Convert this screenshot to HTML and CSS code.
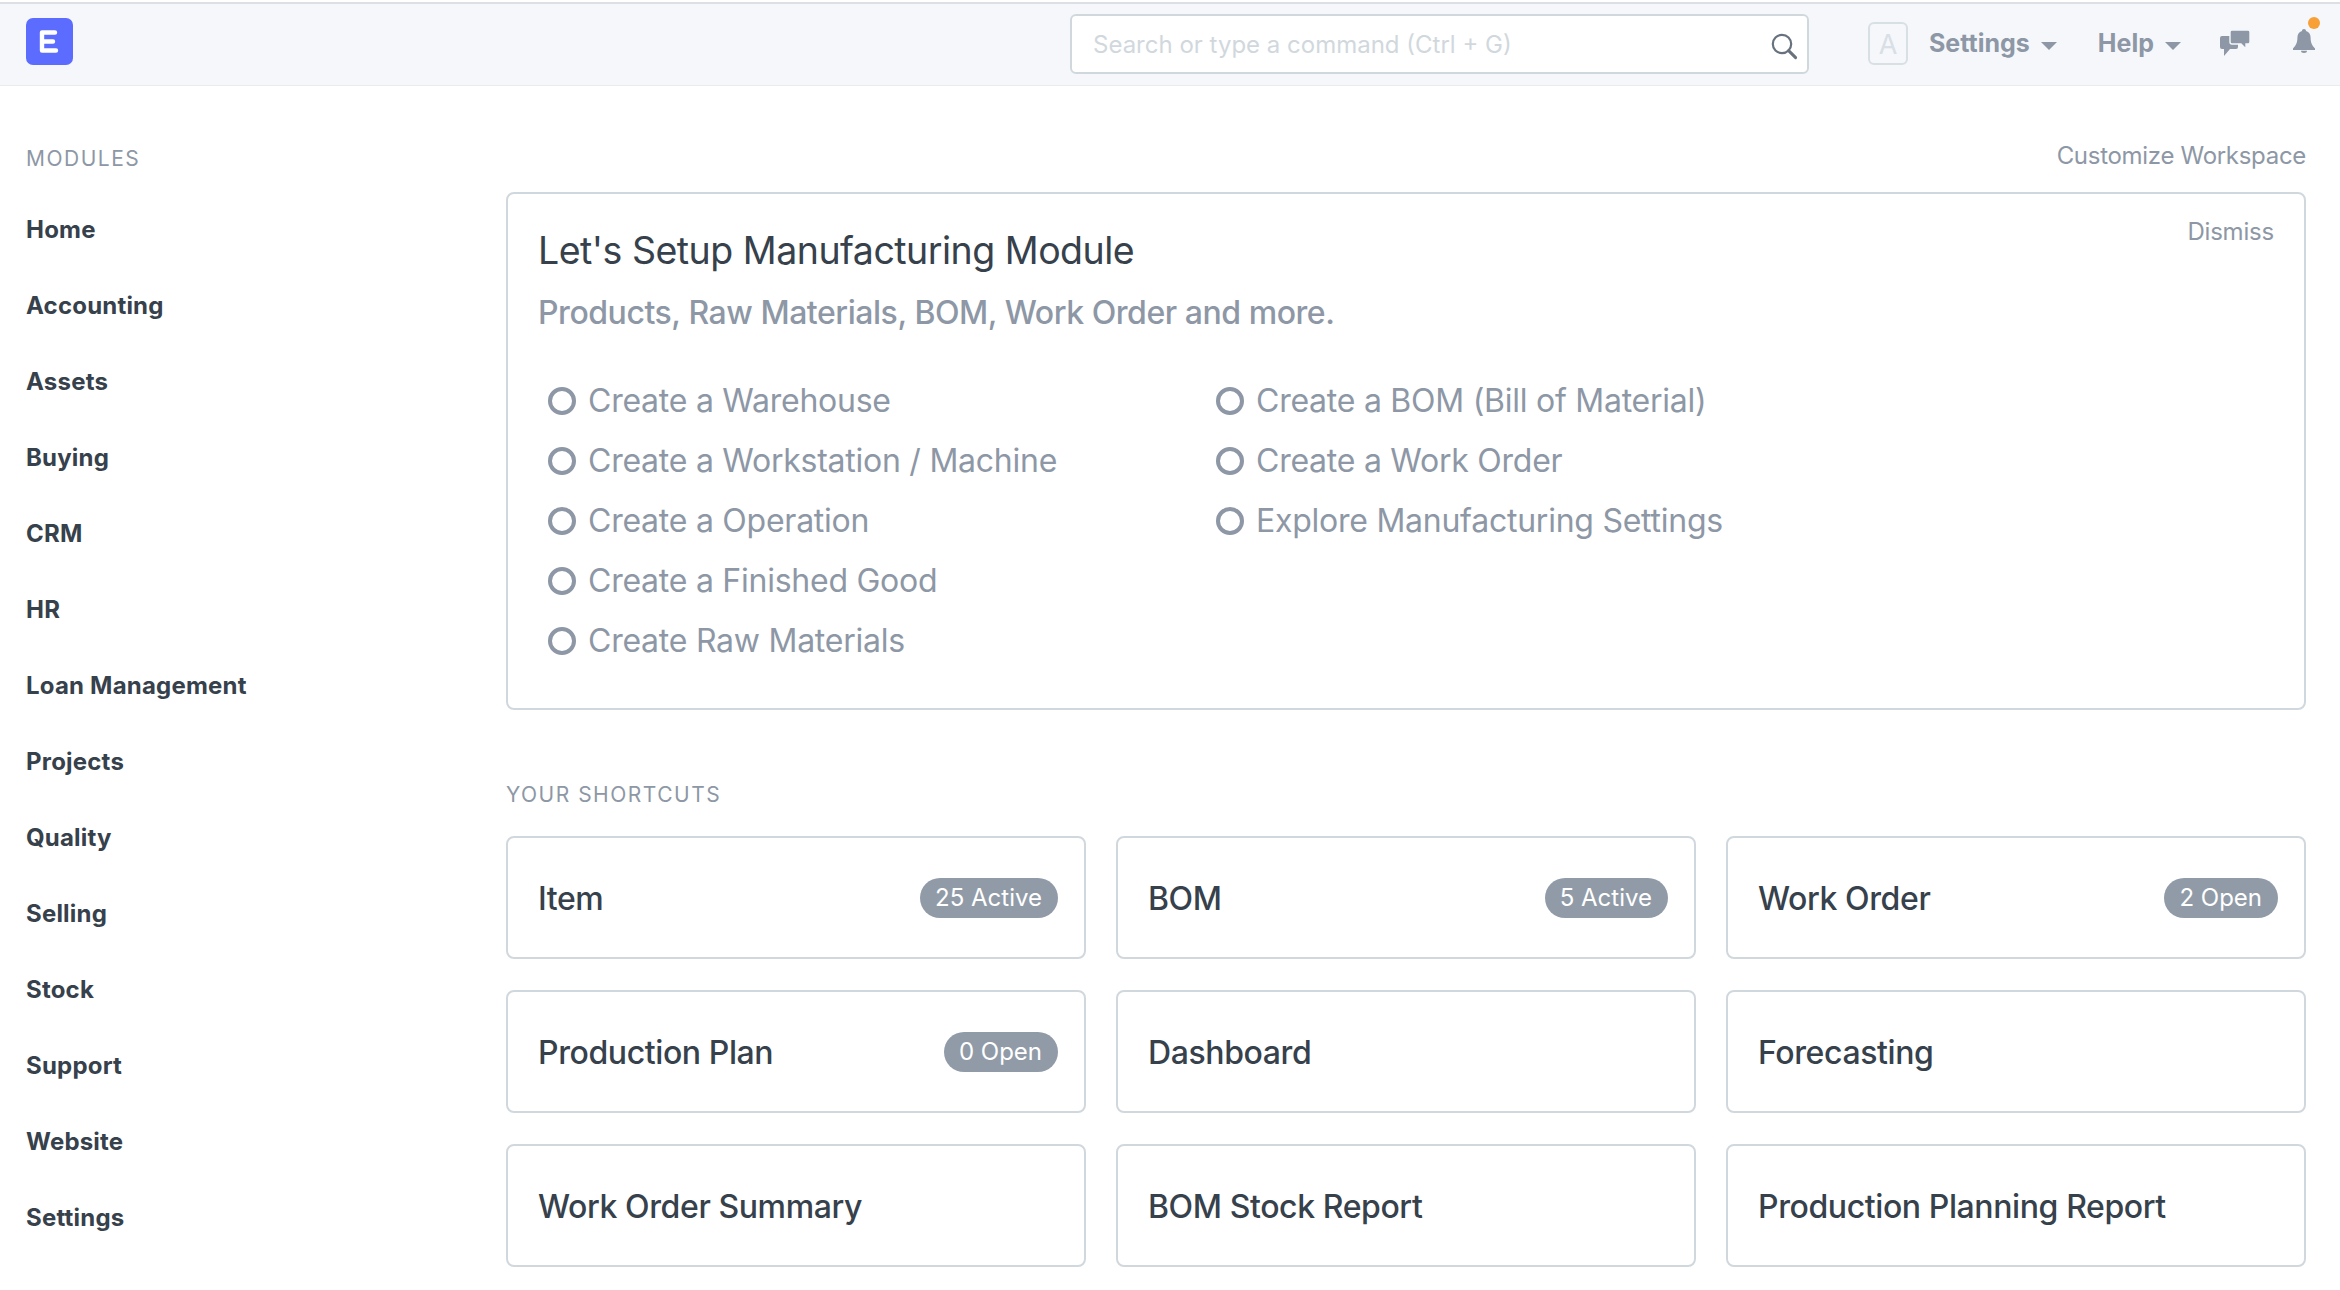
FILE: index.html
```html
<!DOCTYPE html>
<html lang="en">
<head>
  <meta charset="UTF-8" />
  <meta name="viewport" content="width=device-width, initial-scale=1.0" />
  <title>Manufacturing</title>
  <link rel="stylesheet" href="styles.css">
</head>
<body>
  <header class="navbar">
    <div class="logo">
      <svg viewBox="0 0 47 47" width="47" height="47">
        <path d="M16 14.5h13M16 23.5h11M16 32.5h14M16 14.5v18" fill="none" stroke="#fff" stroke-width="4.4" stroke-linecap="round" stroke-linejoin="round"/>
      </svg>
    </div>
    <div class="search">
      <span class="search-text">Search or type a command (Ctrl + G)</span>
      <svg class="search-icon" viewBox="0 0 28 28" width="28" height="28">
        <circle cx="12" cy="12" r="9.2" fill="none" stroke="#68727e" stroke-width="2.2"/>
        <path d="M18.6 18.6l7 7" stroke="#68727e" stroke-width="3" stroke-linecap="round"/>
      </svg>
    </div>
    <div class="avatar">A</div>
    <div class="nav-link nav-settings">Settings <span class="caret"></span></div>
    <div class="nav-link nav-help">Help <span class="caret"></span></div>
    <svg class="chat-icon" viewBox="0 0 30 27" width="30" height="27">
      <path d="M2 7h14a2 2 0 0 1 2 2v9a2 2 0 0 1-2 2H10l-6 7v-7H2a2 2 0 0 1-2-2V9a2 2 0 0 1 2-2z" fill="#8d97a5"/>
      <path d="M12 1h16a2 2 0 0 1 2 2v10a2 2 0 0 1-2 2h-2v5l-5-5h-9a2 2 0 0 1-2-2V3a2 2 0 0 1 2-2z" fill="#8d97a5" stroke="#f5f7fb" stroke-width="1.400"/>
    </svg>
    <div class="bell">
      <svg viewBox="0 0 22 24" width="22" height="24">
        <path d="M11 0c1.300 0 2 .8 2 2 3.200 1 4.600 3.500 4.600 6.800 0 5 1.400 7.500 4.400 10.700V21H0v-1.500c3-3.200 4.400-5.700 4.400-10.700C4.400 5.500 5.800 3 9 2c0-1.200.7-2 2-2z" fill="#8d97a5"/>
        <path d="M8 21.800h6a3 2.200 0 0 1-6 0z" fill="#8d97a5"/>
      </svg>
      <span class="bell-dot"></span>
    </div>
  </header>

  <div class="page">
    <aside class="sidebar">
      <div class="sidebar-label">MODULES</div>
      <a class="module">Home</a>
      <a class="module">Accounting</a>
      <a class="module">Assets</a>
      <a class="module">Buying</a>
      <a class="module">CRM</a>
      <a class="module">HR</a>
      <a class="module">Loan Management</a>
      <a class="module">Projects</a>
      <a class="module">Quality</a>
      <a class="module">Selling</a>
      <a class="module">Stock</a>
      <a class="module">Support</a>
      <a class="module">Website</a>
      <a class="module">Settings</a>
    </aside>

    <main class="content">
      <div class="customize">Customize Workspace</div>

      <section class="setup">
        <div class="dismiss">Dismiss</div>
        <h1 class="setup-title">Let's Setup Manufacturing Module</h1>
        <p class="setup-sub">Products, Raw Materials, BOM, Work Order and more.</p>
        <div class="steps">
          <ul class="step-col">
            <li class="step">Create a Warehouse</li>
            <li class="step">Create a Workstation / Machine</li>
            <li class="step">Create a Operation</li>
            <li class="step">Create a Finished Good</li>
            <li class="step">Create Raw Materials</li>
          </ul>
          <ul class="step-col">
            <li class="step">Create a BOM (Bill of Material)</li>
            <li class="step">Create a Work Order</li>
            <li class="step">Explore Manufacturing Settings</li>
          </ul>
        </div>
      </section>

      <div class="section-label">YOUR SHORTCUTS</div>
      <div class="shortcuts">
        <div class="card"><span>Item</span><span class="pill">25 Active</span></div>
        <div class="card"><span>BOM</span><span class="pill">5 Active</span></div>
        <div class="card"><span>Work Order</span><span class="pill">2 Open</span></div>
        <div class="card"><span>Production Plan</span><span class="pill">0 Open</span></div>
        <div class="card"><span>Dashboard</span></div>
        <div class="card"><span>Forecasting</span></div>
        <div class="card"><span>Work Order Summary</span></div>
        <div class="card"><span>BOM Stock Report</span></div>
        <div class="card"><span>Production Planning Report</span></div>
      </div>
    </main>
  </div>
</body>
</html>
```

FILE: styles.css
```css
html, body {
  margin: 0;
  padding: 0;
  height: 1290px;
  overflow: hidden;
}

body {
  font-family: Inter, "Noto Sans", sans-serif;
  background: #fff;
  color: #36414c;
}

.navbar {
  height: 81px;
  margin-top: 2px;
  border-top: 2px solid #dcdfe3;
  border-bottom: 1px solid #e9ecef;
  background: #f5f7fb;
  display: flex;
  align-items: center;
  padding: 0 24px 0 26px;
}

.logo {
  width: 47px;
  height: 47px;
  border-radius: 7px;
  background: #5b6cff;
  margin-top: -6px;
}

.logo svg {
  display: block;
}

.search {
  flex: none;
  margin-left: 997px;
  width: 705px;
  height: 56px;
  border: 2px solid #d1d8dd;
  border-radius: 6px;
  background: #fff;
  display: flex;
  align-items: center;
  justify-content: space-between;
  padding: 0 9px 0 21px;
  margin-top: -2px;
}

.search-text {
  font-size: 24px;
  color: #d1d8dd;
  margin-top: 2px;
}

.search-icon {
  margin-top: 5px;
}

.avatar {
  margin-left: 59px;
  width: 36px;
  height: 39px;
  border: 2px solid #d8dfe5;
  border-radius: 6px;
  font-size: 27px;
  color: #d8dfe5;
  text-align: center;
  line-height: 41px;
  margin-top: -2px;
}

.nav-link {
  font-size: 25px;
  font-weight: 700;
  color: #8d97a5;
  display: flex;
  align-items: center;
  gap: 11px;
  margin-top: -3px;
}

.nav-settings {
  margin-left: 21px;
}

.nav-help {
  margin-left: 41px;
}

.caret {
  width: 0;
  height: 0;
  border-left: 8px solid transparent;
  border-right: 8px solid transparent;
  border-top: 8px solid #8d97a5;
  margin-top: 5px;
}

.chat-icon {
  margin-left: 39px;
  margin-top: -4px;
}

.bell {
  margin-left: 43px;
  position: relative;
  height: 24px;
  margin-top: -7px;
}

.bell svg {
  display: block;
}

.bell-dot {
  position: absolute;
  top: -12px;
  right: -5px;
  width: 12px;
  height: 12px;
  border-radius: 50%;
  background: #f8a035;
}

.page {
  display: flex;
}

.sidebar {
  width: 506px;
  flex: none;
  padding: 60px 0 0 26px;
  box-sizing: border-box;
}

.sidebar-label {
  font-size: 21px;
  letter-spacing: 1.5px;
  color: #8d97a5;
  line-height: 26px;
  margin-bottom: 37px;
}

.module {
  display: block;
  font-size: 24px;
  font-weight: 700;
  letter-spacing: 0.2px;
  color: #36414c;
  height: 76px;
  line-height: 42px;
}

.content {
  flex: 1;
  padding: 0 34px 0 0;
  min-width: 0;
}

.customize {
  text-align: right;
  font-size: 24px;
  letter-spacing: -0.3px;
  color: #8d97a5;
  height: 106px;
  line-height: 30px;
  padding-top: 55px;
  box-sizing: border-box;
}

.setup {
  height: 518px;
  border: 2px solid #d1d8dd;
  border-radius: 8px;
  box-sizing: border-box;
  padding: 32px 30px 0;
  position: relative;
}

.dismiss {
  position: absolute;
  top: 23px;
  right: 30px;
  font-size: 24px;
  letter-spacing: -0.2px;
  color: #8d97a5;
}

.setup-title {
  margin: 0;
  font-size: 37.5px;
  font-weight: 400;
  letter-spacing: -0.5px;
  line-height: 50px;
  color: #36414c;
}

.setup-sub {
  margin: 12px 0 0;
  font-size: 32px;
  font-weight: 500;
  letter-spacing: -0.45px;
  line-height: 50px;
  color: #8d97a5;
}

.steps {
  display: flex;
  margin-top: 33px;
}

.step-col {
  list-style: none;
  margin: 0;
  padding: 0 0 0 10px;
  width: 658px;
}

.step {
  font-size: 32px;
  letter-spacing: -0.25px;
  line-height: 60px;
  color: #8d97a5;
  display: flex;
  align-items: center;
  gap: 12px;
}

.step::before {
  content: "";
  width: 20px;
  height: 20px;
  border: 4px solid #8d97a5;
  border-radius: 50%;
  flex: none;
}

.section-label {
  margin-top: 72px;
  font-size: 21px;
  letter-spacing: 1.5px;
  line-height: 26px;
  color: #8d97a5;
}

.shortcuts {
  display: grid;
  grid-template-columns: repeat(3, 1fr);
  gap: 31px 30px;
  margin-top: 28px;
}

.card {
  height: 123px;
  border: 2px solid #d1d8dd;
  border-radius: 8px;
  box-sizing: border-box;
  padding: 2px 26px 0 30px;
  display: flex;
  align-items: center;
  justify-content: space-between;
  font-size: 32px;
  font-weight: 500;
  letter-spacing: -0.4px;
  color: #36414c;
}

.pill {
  height: 40px;
  line-height: 40px;
  padding: 0 16px 0 15px;
  margin-top: -2px;
  border-radius: 20px;
  background: #919ba8;
  color: #fff;
  font-size: 24px;
  font-weight: 400;
  letter-spacing: 0;
}
```
